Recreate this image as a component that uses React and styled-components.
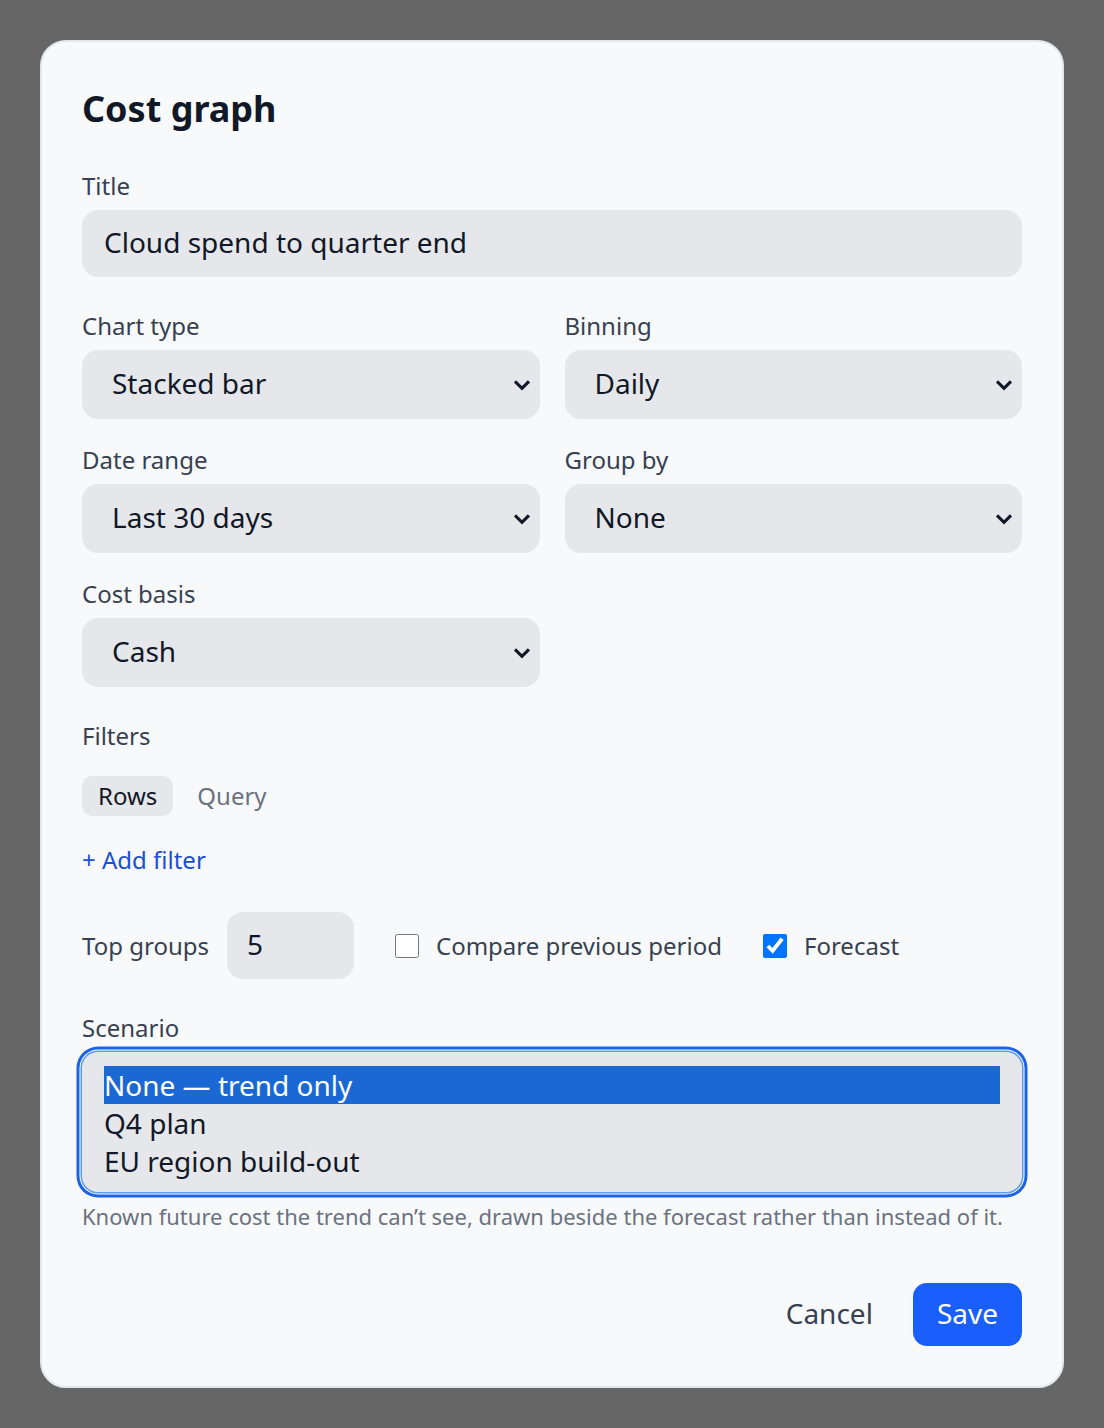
import styled, { createGlobalStyle } from "styled-components";

const GlobalStyle = createGlobalStyle`
  html, body {
    margin: 0;
    padding: 0;
    background: #666666;
  }
  body {
    font-family: "Noto Sans", "Open Sans", sans-serif;
  }
  * { box-sizing: border-box; }
`;

const Page = styled.div`
  padding: 40px;
  min-height: 1428px;
`;

const Dialog = styled.form`
  width: 1024px;
  background: #f8f9fb;
  border: 2px solid #e3e6ea;
  border-radius: 26px;
  padding: 40px;
  display: flex;
  flex-direction: column;
`;

const Heading = styled.h2`
  margin: 0 0 35px;
  font-size: 36px;
  line-height: 54px;
  font-weight: 700;
  color: #111827;
`;

const Field = styled.div`
  display: flex;
  flex-direction: column;
  gap: 9px;
  margin-bottom: ${(p) => p.$after ?? 26}px;
`;

const Label = styled.label`
  font-size: 24px;
  line-height: 30px;
  color: #374151;
`;

const TextInput = styled.input`
  height: 67px;
  width: ${(p) => (p.$w ? `${p.$w}px` : "100%")};
  border: none;
  border-radius: 16px;
  background: #e5e7eb;
  padding: 0 22px 4px ${(p) => p.$pl || 22}px;
  font-family: inherit;
  font-size: 28px;
  color: #111827;
  outline: none;
`;

const Grid = styled.div`
  display: grid;
  grid-template-columns: 1fr 1fr;
  column-gap: 25px;
`;

const SelectWrap = styled.div`
  position: relative;
  height: 69px;

  & svg {
    position: absolute;
    right: 8px;
    top: 50%;
    transform: translateY(-50%);
    pointer-events: none;
  }
`;

const Select = styled.select`
  appearance: none;
  width: 100%;
  height: 100%;
  border: none;
  border-radius: 16px;
  background: #e5e7eb;
  padding: 0 30px 3px;
  font-family: inherit;
  font-size: 28px;
  color: #111827;
  outline: none;
`;

const Tabs = styled.div`
  display: flex;
  gap: 8px;
  margin-bottom: 29px;
`;

const Tab = styled.button`
  height: 40px;
  padding: 0 16px 2px;
  border: none;
  border-radius: 10px;
  background: ${(p) => (p.$active ? "#e5e7eb" : "transparent")};
  color: ${(p) => (p.$active ? "#111827" : "#6b7280")};
  font-family: inherit;
  font-size: 24px;
  cursor: pointer;
`;

const LinkButton = styled.button`
  align-self: flex-start;
  border: none;
  background: none;
  padding: 0;
  margin-bottom: 37px;
  font-family: inherit;
  font-size: 24px;
  line-height: 30px;
  color: #1d4ed8;
  cursor: pointer;
`;

const OptionsRow = styled.div`
  display: flex;
  align-items: center;
  margin-bottom: 34px;
`;

const Inline = styled.label`
  display: flex;
  align-items: center;
  gap: ${(p) => p.$gap || 17}px;
  margin-right: 41px;
  font-size: 24px;
  color: #374151;
`;

const Check = styled.input`
  width: 24px;
  height: 24px;
  margin: 0;
`;

const ListBox = styled.select`
  height: 140px;
  width: 100%;
  border: none;
  border-radius: 16px;
  background: #e5e7eb;
  padding: 14px 22px;
  font-family: inherit;
  font-size: 28px;
  color: #111827;
  outline: none;
  overflow: hidden;
  box-shadow: 0 0 0 1.5px #5b9af8, 0 0 0 2.5px #ffffff, 0 0 0 5.5px #1d63e6;

  & option {
    padding: 0;
    line-height: 38px;
  }
  & option:checked {
    background: #1a68d4 linear-gradient(0deg, #1a68d4 0%, #1a68d4 100%);
    color: #ffffff;
  }
`;

const Hint = styled.p`
  margin: 10px 0 53px;
  font-size: 22px;
  line-height: 28px;
  color: #6b7280;
`;

const Footer = styled.div`
  display: flex;
  justify-content: flex-end;
  align-items: center;
  gap: 40px;
`;

const Button = styled.button`
  height: 63px;
  border: none;
  border-radius: 14px;
  font-family: inherit;
  font-size: 28px;
  cursor: pointer;
  background: ${(p) => (p.$primary ? "#1a5ffe" : "transparent")};
  color: ${(p) => (p.$primary ? "#ffffff" : "#374151")};
  padding: ${(p) => (p.$primary ? "0 24px 3px" : "0 0 3px")};
`;

function Chevron() {
  return (
    <svg width="20" height="20" viewBox="0 0 24 24" fill="none" stroke="#111827" strokeWidth="3.8" strokeLinecap="square">
      <path d="M5 9l7 7 7-7" />
    </svg>
  );
}

function SelectField({ label, value, options, after }) {
  return (
    <Field $after={after}>
      <Label>{label}</Label>
      <SelectWrap>
        <Select defaultValue={value}>
          {options.map((o) => (
            <option key={o}>{o}</option>
          ))}
        </Select>
        <Chevron />
      </SelectWrap>
    </Field>
  );
}

export default function App() {
  return (
    <Page>
      <GlobalStyle />
      <Dialog onSubmit={(e) => e.preventDefault()}>
        <Heading>Cost graph</Heading>

        <Field $after={34}>
          <Label>Title</Label>
          <TextInput defaultValue="Cloud spend to quarter end" />
        </Field>

        <Grid>
          <SelectField label="Chart type" value="Stacked bar" options={["Stacked bar", "Line", "Area"]} />
          <SelectField label="Binning" value="Daily" options={["Daily", "Weekly", "Monthly"]} />
          <SelectField label="Date range" value="Last 30 days" options={["Last 7 days", "Last 30 days", "Last 90 days"]} />
          <SelectField label="Group by" value="None" options={["None", "Service", "Region"]} />
          <SelectField label="Cost basis" value="Cash" options={["Cash", "Amortized"]} after={34} />
        </Grid>

        <Field $after={25}>
          <Label>Filters</Label>
        </Field>
        <Tabs>
          <Tab type="button" $active>Rows</Tab>
          <Tab type="button">Query</Tab>
        </Tabs>
        <LinkButton type="button">+ Add filter</LinkButton>

        <OptionsRow>
          <Inline $gap={18}>
            Top groups
            <TextInput type="text" defaultValue="5" $w={127} $pl={20} />
          </Inline>
          <Inline>
            <Check type="checkbox" />
            Compare previous period
          </Inline>
          <Inline>
            <Check type="checkbox" defaultChecked />
            Forecast
          </Inline>
        </OptionsRow>

        <Field $after={0}>
          <Label>Scenario</Label>
          <ListBox size={3} defaultValue={["None — trend only"]} multiple>
            <option>None — trend only</option>
            <option>Q4 plan</option>
            <option>EU region build-out</option>
          </ListBox>
        </Field>
        <Hint>Known future cost the trend can’t see, drawn beside the forecast rather than instead of it.</Hint>

        <Footer>
          <Button type="button">Cancel</Button>
          <Button type="submit" $primary>Save</Button>
        </Footer>
      </Dialog>
    </Page>
  );
}
